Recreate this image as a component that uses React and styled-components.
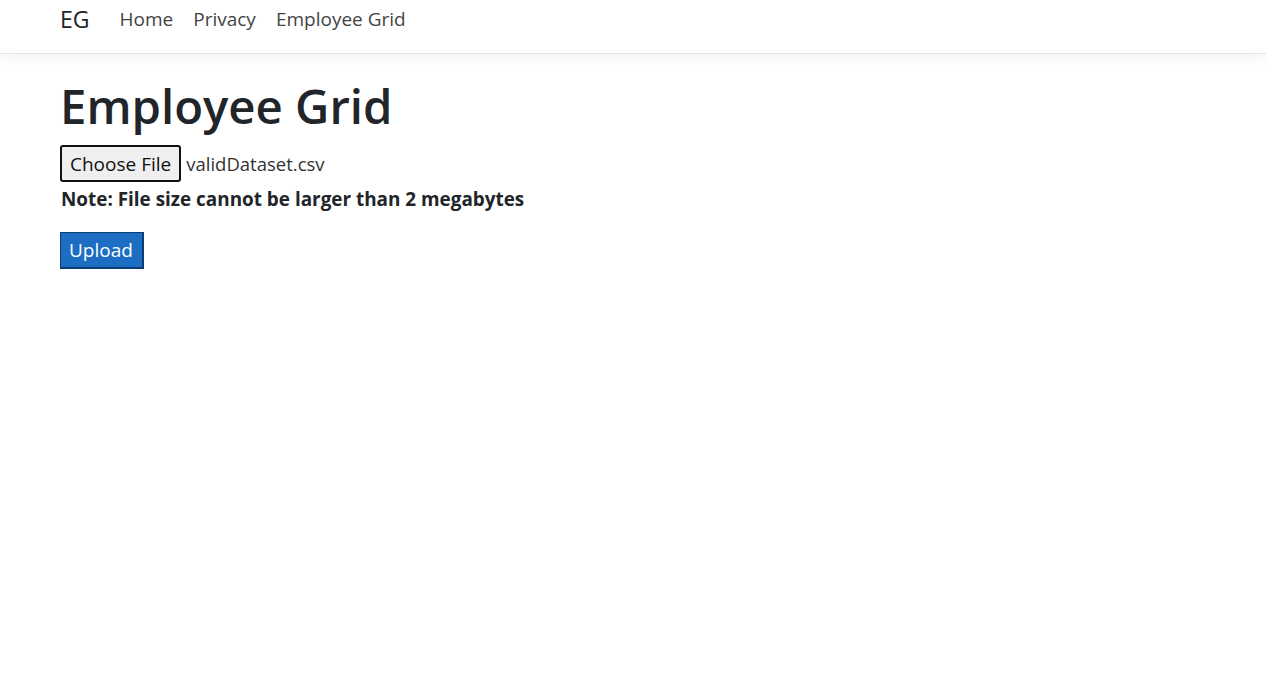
import React from "react";
import styled, { createGlobalStyle } from "styled-components";

const GlobalStyle = createGlobalStyle`
  body {
    margin: 0;
    font-family: "Open Sans", "Noto Sans", sans-serif;
    color: #212529;
    background: #fff;
  }
`;

const Navbar = styled.nav`
  display: flex;
  align-items: flex-start;
  height: 53px;
  padding: 0 0 0 60px;
  border-bottom: 1px solid #e3e5e8;
  box-shadow: 0 4px 12px rgba(0, 0, 0, 0.05);
`;

const Brand = styled.a`
  font-size: 23px;
  line-height: 38px;
  color: #212529;
  margin-right: 20px;
`;

const NavLink = styled.a`
  font-size: 19px;
  line-height: 39px;
  color: #444;
  padding: 0 10px;
`;

const Main = styled.main`
  padding: 22px 0 0 60px;
`;

const Title = styled.h1`
  font-size: 47.3px;
  font-weight: 600;
  line-height: 60px;
  margin: 0 0 9px 0;
`;

const FileRow = styled.div`
  display: flex;
  align-items: center;
  gap: 5px;
`;

const ChooseButton = styled.button`
  height: 37px;
  padding: 0 8px;
  font-family: inherit;
  font-size: 19px;
  color: #111;
  background: #efefef;
  border: 2px solid #111;
  border-radius: 3px;
`;

const FileName = styled.span`
  font-size: 18.5px;
  color: #333;
`;

const Note = styled.p`
  font-size: 18.9px;
  font-weight: 700;
  margin: 4px 0 20px 1px;
`;

const UploadButton = styled.button`
  height: 37px;
  padding: 0 9px 0 8px;
  font-family: inherit;
  font-size: 19px;
  color: #fff;
  background: #1b6ec2;
  border: 1px solid #0e3f74;
  border-bottom-width: 2px;
  border-right-width: 2px;
  border-radius: 0;
`;

export default function App() {
  return (
    <>
      <GlobalStyle />
      <Navbar>
        <Brand>EG</Brand>
        <NavLink>Home</NavLink>
        <NavLink>Privacy</NavLink>
        <NavLink>Employee Grid</NavLink>
      </Navbar>
      <Main>
        <Title>Employee Grid</Title>
        <FileRow>
          <ChooseButton>Choose File</ChooseButton>
          <FileName>validDataset.csv</FileName>
        </FileRow>
        <Note>Note: File size cannot be larger than 2 megabytes</Note>
        <UploadButton>Upload</UploadButton>
      </Main>
    </>
  );
}
